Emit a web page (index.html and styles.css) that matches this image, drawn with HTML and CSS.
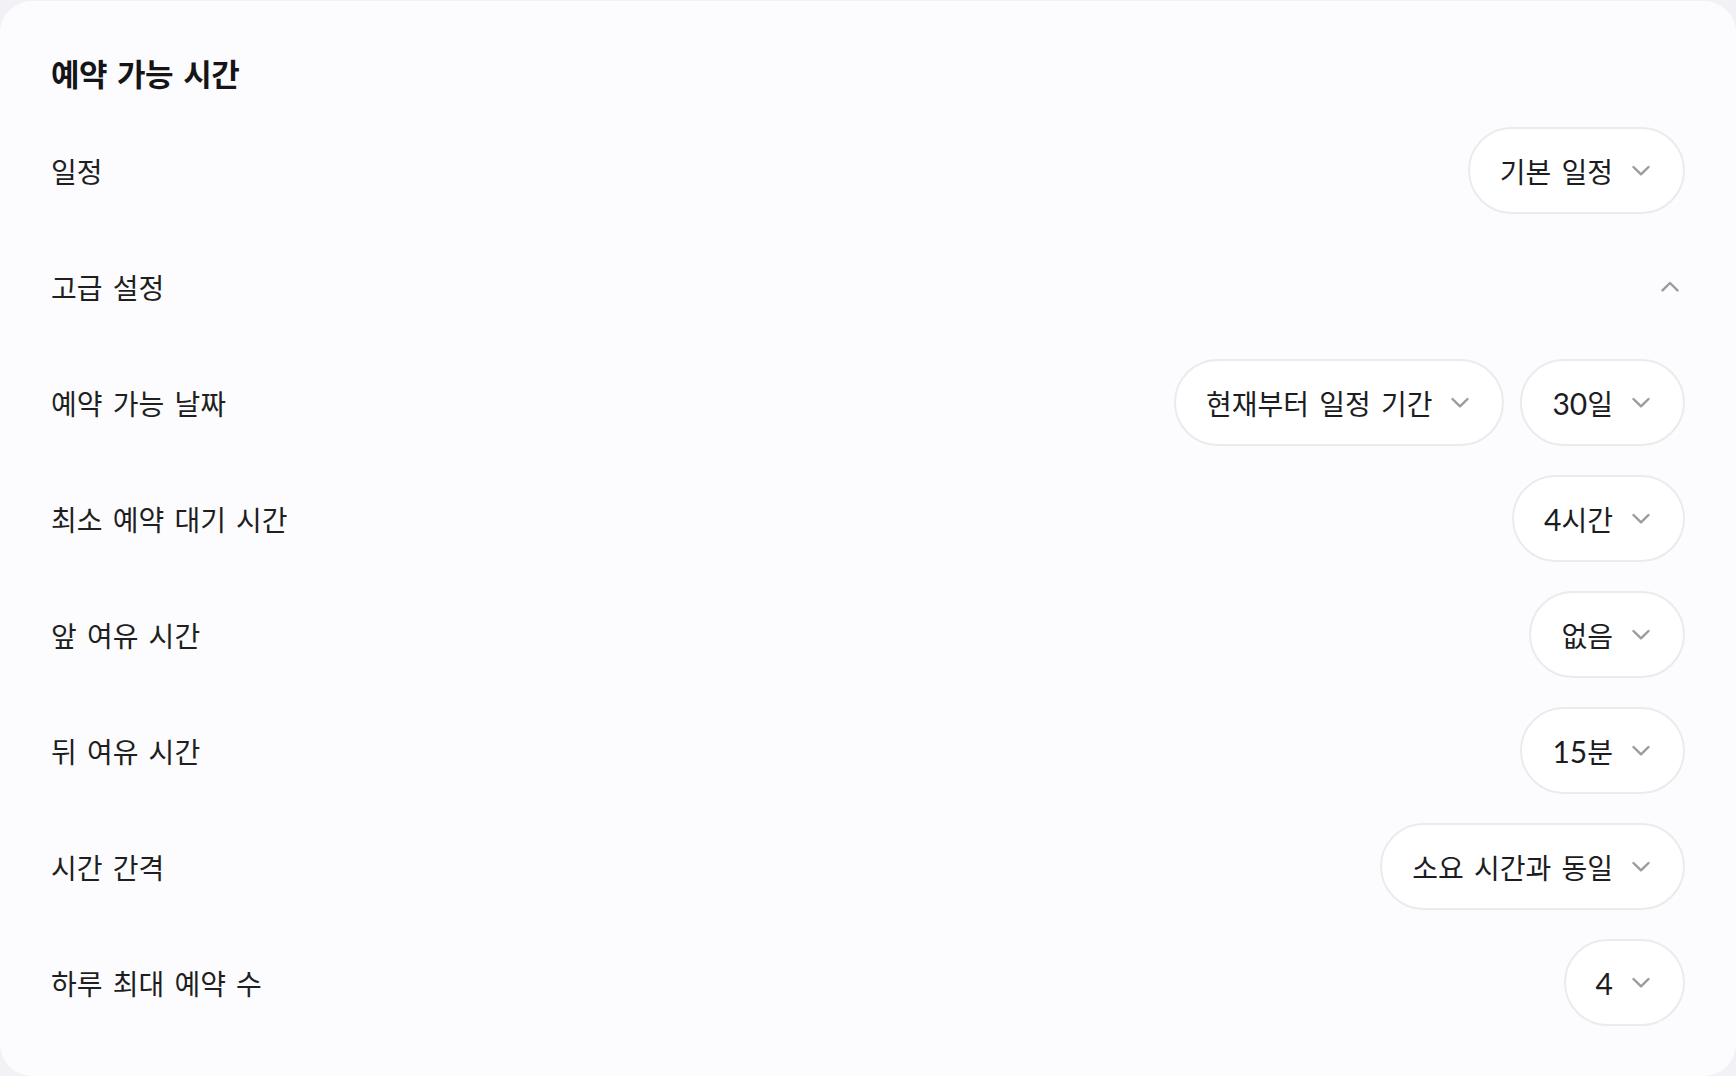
FILE: index.html
```html
<!DOCTYPE html>
<html lang="ko">
<head>
<meta charset="utf-8">
<title>예약 가능 시간</title>
<link rel="stylesheet" href="styles.css">
</head>
<body>
<div class="card">
  <h2 class="title">예약 가능 시간</h2>
  <div class="rows">
    <div class="row">
      <span class="label">일정</span>
      <div class="controls">
        <button class="pill"><span class="val">기본 일정</span><span class="ico"><svg width="18" height="11" viewBox="0 0 18 11"><path d="M1.5 2 L9 9.3 L16.5 2" /></svg></span></button>
      </div>
    </div>
    <div class="row">
      <span class="label">고급 설정</span>
      <div class="controls">
        <span class="toggle"><svg width="18" height="11" viewBox="0 0 18 11"><path d="M1.5 9.3 L9 2 L16.5 9.3" /></svg></span>
      </div>
    </div>
    <div class="row">
      <span class="label">예약 가능 날짜</span>
      <div class="controls">
        <button class="pill"><span class="val">현재부터 일정 기간</span><span class="ico"><svg width="18" height="11" viewBox="0 0 18 11"><path d="M1.5 2 L9 9.3 L16.5 2" /></svg></span></button>
        <button class="pill"><span class="val"><span class="num">30</span>일</span><span class="ico"><svg width="18" height="11" viewBox="0 0 18 11"><path d="M1.5 2 L9 9.3 L16.5 2" /></svg></span></button>
      </div>
    </div>
    <div class="row">
      <span class="label">최소 예약 대기 시간</span>
      <div class="controls">
        <button class="pill"><span class="val"><span class="num">4</span>시간</span><span class="ico"><svg width="18" height="11" viewBox="0 0 18 11"><path d="M1.5 2 L9 9.3 L16.5 2" /></svg></span></button>
      </div>
    </div>
    <div class="row">
      <span class="label">앞 여유 시간</span>
      <div class="controls">
        <button class="pill"><span class="val">없음</span><span class="ico"><svg width="18" height="11" viewBox="0 0 18 11"><path d="M1.5 2 L9 9.3 L16.5 2" /></svg></span></button>
      </div>
    </div>
    <div class="row">
      <span class="label">뒤 여유 시간</span>
      <div class="controls">
        <button class="pill"><span class="val"><span class="num">15</span>분</span><span class="ico"><svg width="18" height="11" viewBox="0 0 18 11"><path d="M1.5 2 L9 9.3 L16.5 2" /></svg></span></button>
      </div>
    </div>
    <div class="row">
      <span class="label">시간 간격</span>
      <div class="controls">
        <button class="pill"><span class="val">소요 시간과 동일</span><span class="ico"><svg width="18" height="11" viewBox="0 0 18 11"><path d="M1.5 2 L9 9.3 L16.5 2" /></svg></span></button>
      </div>
    </div>
    <div class="row">
      <span class="label">하루 최대 예약 수</span>
      <div class="controls">
        <button class="pill"><span class="val"><span class="num">4</span></span><span class="ico"><svg width="18" height="11" viewBox="0 0 18 11"><path d="M1.5 2 L9 9.3 L16.5 2" /></svg></span></button>
      </div>
    </div>
  </div>
</div>
</body>
</html>
```

FILE: styles.css
```css
html, body {
  margin: 0;
  padding: 0;
}
body {
  background: #f2f2f6;
  padding-top: 1px;
  font-family: "Lato", "Noto Sans CJK KR", sans-serif;
  color: #1d1d1f;
}
.card {
  box-sizing: border-box;
  background: #fcfcfe;
  border-radius: 32px;
  min-height: 1075px;
  padding: 53px 51px 49px 51px;
}
.title {
  margin: 0 0 33px 0;
  font-size: 31px;
  line-height: 40px;
  height: 40px;
  font-weight: 700;
  letter-spacing: -0.5px;
  word-spacing: 3px;
  color: #151517;
}
.rows {
  display: flex;
  flex-direction: column;
  gap: 29px;
}
.row {
  display: flex;
  align-items: center;
  justify-content: space-between;
  height: 87px;
}
.label {
  font-size: 28px;
  letter-spacing: 0;
  word-spacing: 3px;
  line-height: 38px;
  padding-top: 2px;
  color: #1f1f21;
}
.controls {
  display: flex;
  align-items: center;
  gap: 16px;
}
.pill {
  box-sizing: border-box;
  height: 87px;
  display: flex;
  align-items: center;
  gap: 16px;
  padding: 0 30px 0 30px;
  background: #ffffff;
  border: 2px solid #ebebef;
  border-radius: 44px;
  font-family: inherit;
  color: #1d1d1f;
  cursor: pointer;
}
.val {
  font-size: 28px;
  letter-spacing: 0;
  word-spacing: 3px;
  line-height: 38px;
  padding-top: 2px;
}
.num {
  font-size: 30px;
  letter-spacing: 0;
}
.ico, .toggle {
  width: 24px;
  height: 24px;
  display: flex;
  align-items: center;
  justify-content: center;
}
.toggle {
  margin-right: 3px;
}
.ico svg path, .toggle svg path {
  fill: none;
  stroke: #9a9a9f;
  stroke-width: 2.4;
  stroke-linecap: round;
  stroke-linejoin: round;
}
```
